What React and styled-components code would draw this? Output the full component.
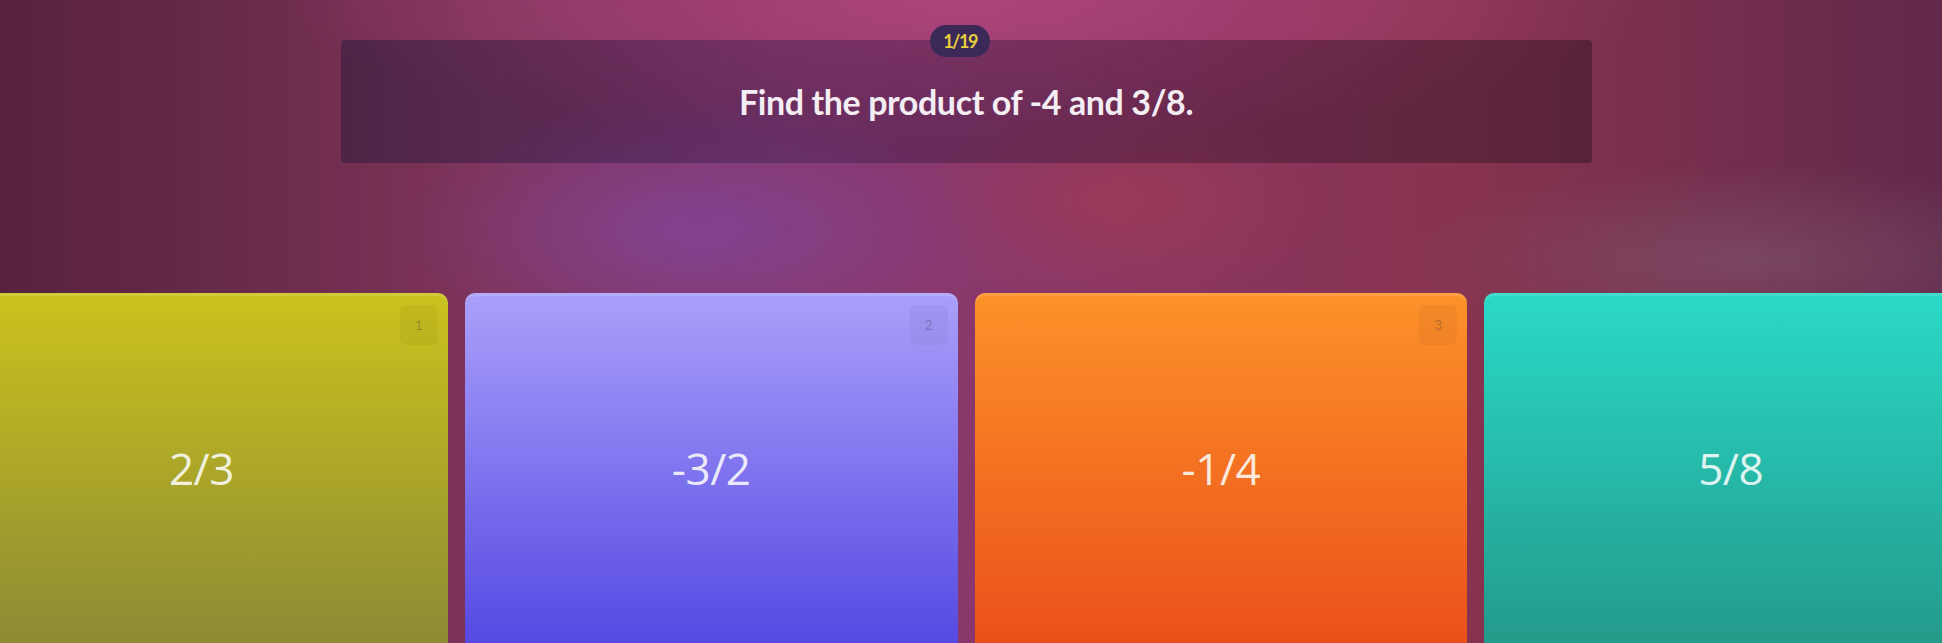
import React from "react";
import styled, { createGlobalStyle } from "styled-components";

const Global = createGlobalStyle`
  html, body {
    margin: 0;
    padding: 0;
    background: #6a2f55;
  }
  #root {
    height: 643px;
    overflow: hidden;
  }
`;

const answers = [
  { n: 1, text: "2/3", top: "#cbc31e", bottom: "#8d8a34" },
  { n: 2, text: "-3/2", top: "#aaa0fa", bottom: "#5549e2" },
  { n: 3, text: "-1/4", top: "#fd922a", bottom: "#ea5019" },
  { n: 4, text: "5/8", top: "#2ad9c8", bottom: "#239a8a" },
];

const App = () => {
  return (
    <Page>
      <Global />
      <Header>
        <QuestionPanel>
          <Counter>1/19</Counter>
          <Question>Find the product of -4 and 3/8.</Question>
        </QuestionPanel>
      </Header>
      <Options>
        {answers.map((a) => (
          <Option key={a.n} $top={a.top} $bottom={a.bottom}>
            {a.n < 4 && <Key>{a.n}</Key>}
            <Answer>{a.text}</Answer>
          </Option>
        ))}
      </Options>
    </Page>
  );
};

export default App;

const Page = styled.div`
  height: 643px;
  display: flex;
  flex-direction: column;
  overflow: hidden;
  font-family: "Lato", "Noto Sans", sans-serif;
  background:
    radial-gradient(ellipse 420px 200px at 700px 230px, rgba(130, 70, 160, 0.75), transparent 70%),
    radial-gradient(ellipse 300px 160px at 1120px 200px, rgba(165, 60, 80, 0.55), transparent 70%),
    radial-gradient(ellipse 500px 140px at 1750px 260px, rgba(130, 100, 120, 0.45), transparent 70%),
    radial-gradient(ellipse 800px 170px at 960px 0px, rgba(180, 70, 125, 0.85), transparent 85%),
    linear-gradient(90deg, #56223c 0%, #7e3459 25%, #8a386c 50%, #88334f 75%, #62294a 100%);
`;

const Header = styled.header`
  padding-top: 40px;
  display: flex;
  justify-content: center;
  padding-right: 10px;
`;

const QuestionPanel = styled.div`
  position: relative;
  width: 1251px;
  height: 123px;
  box-sizing: border-box;
  padding-top: 42px;
  display: flex;
  justify-content: center;
  border-radius: 4px;
  background: linear-gradient(
    90deg,
    rgba(40, 25, 60, 0.5) 0%,
    rgba(60, 30, 80, 0.42) 35%,
    rgba(55, 20, 45, 0.42) 70%,
    rgba(45, 20, 35, 0.48) 100%
  );
`;

const Counter = styled.div`
  position: absolute;
  top: -15px;
  left: 50%;
  transform: translateX(-60%);
  width: 60px;
  height: 32px;
  border-radius: 16px;
  background: #3b2a58;
  color: #e9cf3c;
  font-size: 18px;
  font-weight: 700;
  letter-spacing: -1.5px;
  display: flex;
  align-items: center;
  justify-content: center;
`;

const Question = styled.h1`
  margin: 0;
  color: #f4eef4;
  font-size: 34px;
  font-weight: 700;
  line-height: 40px;
  letter-spacing: -0.4px;
`;

const Options = styled.div`
  flex: 1;
  margin: 130px -35px 0 -45px;
  display: grid;
  grid-template-columns: repeat(4, 1fr);
  gap: 17px;
`;

const Option = styled.div`
  position: relative;
  border-radius: 10px 10px 0 0;
  background: linear-gradient(180deg, ${(p) => p.$top} 0%, ${(p) => p.$bottom} 100%);
  box-shadow: inset 0 3px 0 rgba(255, 255, 255, 0.12);
  display: flex;
  align-items: center;
  justify-content: center;
`;

const Key = styled.span`
  position: absolute;
  top: 12px;
  right: 10px;
  width: 38px;
  height: 40px;
  border-radius: 6px;
  background: rgba(0, 0, 0, 0.04);
  color: rgba(40, 30, 60, 0.3);
  font-size: 13px;
  display: flex;
  align-items: center;
  justify-content: center;
`;

const Answer = styled.span`
  color: rgba(255, 255, 255, 0.85);
  font-family: "Open Sans", "Noto Sans", sans-serif;
  font-size: 44px;
  font-weight: 400;
  letter-spacing: -0.5px;
`;
